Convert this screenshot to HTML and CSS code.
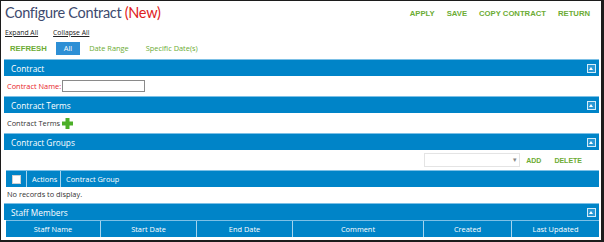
FILE: index.html
```html
<!DOCTYPE html>
<html lang="en">
<head>
    <meta charset="UTF-8">
    <title>Configure Contract</title>
    <link rel="stylesheet" href="styles.css">
</head>
<body>
    <div class="frame">
        <div class="top">
            <h1>Configure Contract <span class="new">(New)</span></h1>
            <div class="actions">
                <a class="cmd">APPLY</a>
                <a class="cmd">SAVE</a>
                <a class="cmd">COPY CONTRACT</a>
                <a class="cmd">RETURN</a>
            </div>
        </div>

        <div class="expanders">
            <a>Expand All</a>
            <a>Collapse All</a>
        </div>

        <div class="filters">
            <a class="cmd">REFRESH</a>
            <span class="tab active">All</span>
            <span class="tab">Date Range</span>
            <span class="tab">Specific Date(s)</span>
        </div>

        <!-- Contract -->
        <div class="bar"><span>Contract</span><i class="collapse"></i></div>
        <div class="row">
            <label class="req">Contract Name:</label>
            <input class="field" type="text">
        </div>

        <!-- Contract terms -->
        <div class="bar"><span>Contract Terms</span><i class="collapse"></i></div>
        <div class="row">
            <span>Contract Terms</span>
            <svg class="plus" width="11" height="11" viewBox="0 0 11 11">
                <rect x="3.5" y="0" width="4" height="11" fill="#4caf28"/>
                <rect x="0" y="3.5" width="11" height="4" fill="#4caf28"/>
            </svg>
        </div>

        <!-- Contract groups -->
        <div class="bar"><span>Contract Groups</span><i class="collapse"></i></div>
        <div class="group-tools">
            <div class="combo"><span class="arrow">&#9662;</span></div>
            <a class="cmd small">ADD</a>
            <a class="cmd small">DELETE</a>
        </div>
        <div class="grid-head groups">
            <div class="cell chk"><span class="box"></span></div>
            <div class="cell">Actions</div>
            <div class="cell">Contract Group</div>
        </div>
        <div class="empty">No records to display.</div>

        <!-- Staff -->
        <div class="bar"><span>Staff Members</span><i class="collapse"></i></div>
        <div class="grid-head staff">
            <div class="cell">Staff Name</div>
            <div class="cell">Start Date</div>
            <div class="cell">End Date</div>
            <div class="cell">Comment</div>
            <div class="cell">Created</div>
            <div class="cell">Last Updated</div>
        </div>
    </div>
</body>
</html>
```

FILE: styles.css
```css
body {
    margin: 0;
    font-family: 'Open Sans', 'Noto Sans', sans-serif;
    font-size: 7.4px;
    color: #333;
    background: #fff;
}

.frame {
    width: 604px;
    height: 242px;
    box-sizing: border-box;
    border: 1px solid #1c1c1c;
    border-right-width: 3px;
    border-bottom-width: 2px;
    padding: 0 2px 0 3px;
    overflow: hidden;
}

a {
    cursor: pointer;
}

/* Title row */
.top {
    display: flex;
    justify-content: space-between;
    align-items: flex-start;
    height: 26px;
}

h1 {
    margin: 0;
    padding: 1px 0 0 1px;
    font-family: Lato, 'Open Sans', sans-serif;
    font-weight: normal;
    font-size: 14.5px;
    letter-spacing: -0.3px;
    color: #3d4a6e;
    line-height: 22px;
}

.new {
    color: #e0201b;
}

.actions {
    display: flex;
    gap: 12px;
    padding: 8px 9px 0 0;
}

.cmd {
    font-family: 'Liberation Sans', Arial, sans-serif;
    font-weight: bold;
    font-size: 7.7px;
    color: #6cac34;
}

.cmd.small {
    font-size: 7px;
}

/* Expand / collapse */
.expanders {
    display: flex;
    gap: 15px;
    padding-left: 1px;
    height: 13px;
    line-height: 11px;
}

.expanders a {
    text-decoration: underline;
    color: #222;
    font-size: 6.8px;
}

/* Filter tabs */
.filters {
    display: flex;
    align-items: center;
    height: 17px;
    padding: 0 0 2px 6px;
}

.filters .cmd {
    margin-right: 9px;
}

.tab {
    color: #6cac34;
    padding: 0 8px;
    line-height: 13px;
    margin-right: 1px;
}

.tab.active {
    background: #2d8fd5;
    color: #fff;
    padding: 0 8px;
    margin-right: 1px;
}

/* Section bars */
.bar {
    display: flex;
    justify-content: space-between;
    align-items: center;
    height: 17px;
    box-sizing: border-box;
    background: #0084c8;
    border-top: 1px solid #7cc0e6;
    color: #fff;
    font-size: 8.3px;
    padding: 0 3px 0 7px;
}

.collapse {
    position: relative;
    width: 7px;
    height: 7px;
    border: 1px solid #d6ecf8;
    background: #2a98d4;
}

.collapse::after {
    content: "";
    position: absolute;
    left: 1px;
    top: 2px;
    border-left: 2.5px solid transparent;
    border-right: 2.5px solid transparent;
    border-bottom: 3px solid #fff;
}

.row {
    display: flex;
    align-items: center;
    gap: 1px;
    height: 20px;
    padding-left: 3px;
}

.req {
    color: #e8242a;
}

.field {
    width: 83px;
    height: 12px;
    box-sizing: border-box;
    border: 1px solid #8a8a8a;
    padding: 0;
    margin: 0;
}

.plus {
    margin-left: 1px;
}

/* Contract groups tools */
.group-tools {
    display: flex;
    justify-content: flex-end;
    align-items: center;
    gap: 13px;
    height: 20px;
    padding-right: 17px;
}

.combo {
    width: 96px;
    height: 14px;
    box-sizing: border-box;
    border: 1px solid #e4e4e4;
    position: relative;
    margin-right: -7px;
}

.combo .arrow {
    position: absolute;
    right: 2px;
    top: 1px;
    font-size: 7px;
    color: #888;
}

/* Grid headers */
.grid-head {
    display: grid;
    height: 17px;
    box-sizing: border-box;
    margin-left: 2px;
    background: #0084c8;
    border-top: 1px solid #7cc0e6;
    color: #fff;
}

.grid-head .cell {
    display: flex;
    align-items: center;
    border-right: 1px solid #a6d4ee;
    padding-left: 5px;
}

.grid-head .cell:last-child {
    border-right: none;
}

.groups {
    grid-template-columns: 21px 34px 1fr;
}

.groups .chk {
    justify-content: center;
    padding: 0;
}

.box {
    width: 7px;
    height: 7px;
    background: #fff;
    border: 1px solid #d0d0d0;
}

.staff {
    grid-template-columns: 95px 96px 96px 131px 88px 1fr;
}

.staff .cell {
    justify-content: center;
    padding: 0;
}

.empty {
    height: 16px;
    line-height: 15px;
    padding-left: 3px;
}
```
